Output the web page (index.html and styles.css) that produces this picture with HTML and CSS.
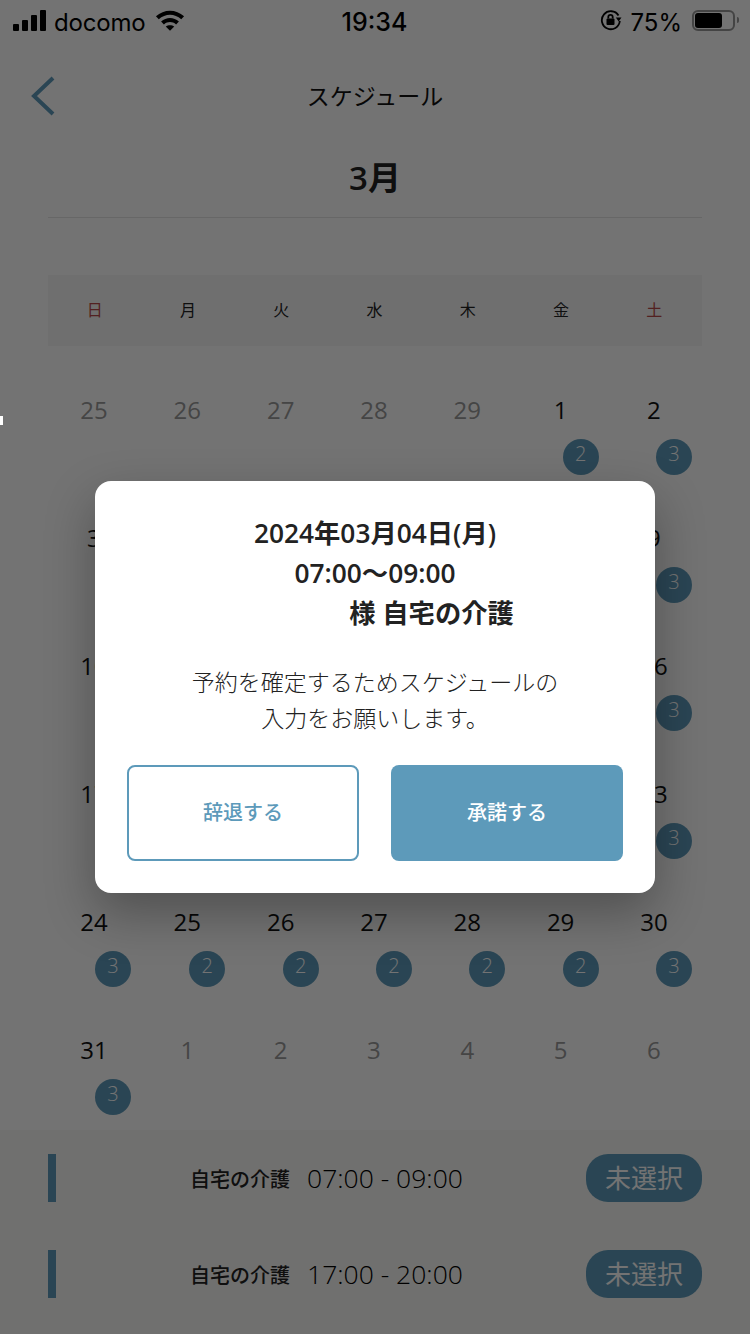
FILE: index.html
```html
<!DOCTYPE html>
<html lang="ja">
<head>
	<meta charset="UTF-8">
	<title>スケジュール</title>
	<link rel="stylesheet" href="styles.css">
</head>
<body>
	<div class="page">
		<div class="status">
			<div class="status-left">
				<span class="signal"><i></i><i></i><i></i><i></i></span>
				<span class="carrier">docomo</span>
				<svg class="wifi" width="30" height="23" viewBox="0 0 32 24"><path d="M1 7.500C9.500 -.5 22.500 -.5 31 7.500L28 10.700C21 4.300 11 4.300 4 10.700Z"/><path d="M6.500 13C12 8 20 8 25.500 13L22.500 16.200C18.500 12.800 13.500 12.800 9.500 16.200Z"/><path d="M11.500 18.500C14 16.500 18 16.500 20.500 18.500L16 23Z"/></svg>
			</div>
			<div class="status-time">19:34</div>
			<div class="status-right">
				<svg class="lock" width="22" height="22" viewBox="0 0 22 22"><path class="lock-ring" d="M18.500 6.500A9 9 0 1 0 19.800 12"/><path d="M15.800 8.500H21.500L18.700 12.500Z"/><rect x="6.500" y="9.500" width="8" height="6.500" rx="1"/><path class="lock-ring" d="M8.300 9.500V8A2.200 2.200 0 0 1 12.700 8V9.500"/></svg>
				<span class="battery-text">75%</span>
				<span class="battery"><b></b></span>
				<span class="battery-tip"></span>
			</div>
		</div>

		<div class="nav">
			<svg class="back" width="26" height="40" viewBox="0 0 26 40"><path d="M23 2L4 20L23 38"/></svg>
			<div class="nav-title">スケジュール</div>
		</div>

		<div class="calendar">
			<div class="month">3月</div>
			<div class="week">
				<span class="sun">日</span><span>月</span><span>火</span><span>水</span><span>木</span><span>金</span><span class="sat">土</span>
			</div>
			<div class="days">
				<div class="day off"><p>25</p></div>
				<div class="day off"><p>26</p></div>
				<div class="day off"><p>27</p></div>
				<div class="day off"><p>28</p></div>
				<div class="day off"><p>29</p></div>
				<div class="day"><p>1</p><em>2</em></div>
				<div class="day"><p>2</p><em>3</em></div>

				<div class="day"><p>3</p></div>
				<div class="day"></div>
				<div class="day"></div>
				<div class="day"></div>
				<div class="day"></div>
				<div class="day"></div>
				<div class="day"><p>9</p><em>3</em></div>

				<div class="day"><p>10</p></div>
				<div class="day"></div>
				<div class="day"></div>
				<div class="day"></div>
				<div class="day"></div>
				<div class="day"></div>
				<div class="day"><p>16</p><em>3</em></div>

				<div class="day"><p>17</p></div>
				<div class="day"></div>
				<div class="day"></div>
				<div class="day"></div>
				<div class="day"></div>
				<div class="day"></div>
				<div class="day"><p>23</p><em>3</em></div>

				<div class="day"><p>24</p><em>3</em></div>
				<div class="day"><p>25</p><em>2</em></div>
				<div class="day"><p>26</p><em>2</em></div>
				<div class="day"><p>27</p><em>2</em></div>
				<div class="day"><p>28</p><em>2</em></div>
				<div class="day"><p>29</p><em>2</em></div>
				<div class="day"><p>30</p><em>3</em></div>

				<div class="day"><p>31</p><em>3</em></div>
				<div class="day off"><p>1</p></div>
				<div class="day off"><p>2</p></div>
				<div class="day off"><p>3</p></div>
				<div class="day off"><p>4</p></div>
				<div class="day off"><p>5</p></div>
				<div class="day off"><p>6</p></div>
			</div>
		</div>

		<div class="slots">
			<div class="slot">
				<span class="slot-bar"></span>
				<span class="slot-name">自宅の介護</span>
				<span class="slot-time">07:00 - 09:00</span>
				<span class="slot-tag">未選択</span>
			</div>
			<div class="slot">
				<span class="slot-bar"></span>
				<span class="slot-name">自宅の介護</span>
				<span class="slot-time">17:00 - 20:00</span>
				<span class="slot-tag">未選択</span>
			</div>
		</div>
	</div>

	<div class="mask">
		<div class="dialog">
			<div class="dialog-head">
				<p>2024年03月04日(月)</p>
				<p>07:00〜09:00</p>
				<p class="dialog-who">様 自宅の介護</p>
			</div>
			<div class="dialog-text">予約を確定するためスケジュールの<br>入力をお願いします。</div>
			<div class="dialog-btns">
				<a class="btn btn-line">辞退する</a>
				<a class="btn btn-fill">承諾する</a>
			</div>
		</div>
	</div>
	<span class="speck"></span>
</body>
</html>
```

FILE: styles.css
```css
*{
	padding: 0;
	margin: 0;
	box-sizing: border-box;
}

body{
	width: 750px;
	height: 1334px;
	overflow: hidden;
	position: relative;
	background: #fff;
	color: #222;
	font-family: "Open Sans", "Noto Sans CJK JP", sans-serif;
}

.page{
	height: 1334px;
	display: flex;
	flex-direction: column;
}

/* status bar */
.status{
	height: 40px;
	padding: 0 11px 0 13px;
	display: grid;
	grid-template-columns: 1fr auto 1fr;
	align-items: center;
	color: #000;
	font-family: Inter, "Liberation Sans", sans-serif;
	font-size: 24px;
	position: relative;
	z-index: 3;
}
.status-left,
.status-right{
	display: flex;
	align-items: center;
}
.status-right{
	justify-content: flex-end;
}
.signal{
	display: flex;
	align-items: flex-end;
	gap: 3px;
	height: 21px;
	margin-right: 9px;
}
.signal i{
	width: 6px;
	background: #000;
	border-radius: 1px;
}
.signal i:nth-child(1){ height: 7px; }
.signal i:nth-child(2){ height: 11px; }
.signal i:nth-child(3){ height: 16px; }
.signal i:nth-child(4){ height: 21px; }
.carrier,
.status-time,
.battery-text{
	padding-top: 4px;
}
.carrier{
	letter-spacing: -.2px;
	margin-left: -1px;
}
.wifi{
	margin-left: 10px;
}
.status-time{
	font-weight: 500;
	font-size: 25px;
	padding-right: 3px;
}
.lock{
	margin-right: 8px;
}
.lock-ring{
	fill: none;
	stroke: #000;
	stroke-width: 1.800;
}
.battery-text{
	margin-right: 10px;
}
.battery{
	width: 43px;
	height: 21px;
	border: 2px solid #444;
	border-radius: 6px;
	padding: 1px;
	display: block;
}
.battery b{
	display: block;
	width: 27px;
	height: 15px;
	background: #000;
	border-radius: 3px;
}
.battery-tip{
	width: 2px;
	height: 6px;
	background: #444;
	margin-left: 2px;
	border-radius: 0 2px 2px 0;
}

/* nav */
.nav{
	height: 112px;
	flex: none;
	position: relative;
	display: flex;
	justify-content: center;
	padding-top: 38px;
}
.nav-title{
	font-size: 23px;
	line-height: 36px;
	font-weight: 400;
	color: #111;
}
.back{
	position: absolute;
	left: 30px;
	top: 36px;
}
.back path{
	fill: none;
	stroke: #5d9aba;
	stroke-width: 4px;
}

/* calendar */
.calendar{
	padding: 0 48px;
	flex: 1;
	min-height: 0;
}
.month{
	height: 66px;
	border-bottom: 1px solid #e4e4e4;
	text-align: center;
	font-size: 33px;
	font-weight: 600;
	line-height: 52px;
}
.week{
	margin-top: 57px;
	height: 71px;
	background: #f6f6f6;
	padding: 0 1px 4px 0;
	display: grid;
	grid-template-columns: repeat(7, 1fr);
	align-items: center;
	text-align: center;
	font-size: 16px;
}
.sun,
.sat{
	color: #b94a4a;
}
.days{
	margin: 36px 0 0 -.7px;
	padding-right: 1.400px;
	display: grid;
	grid-template-columns: repeat(7, 1fr);
	grid-auto-rows: 128px;
}
.day{
	display: flex;
	flex-direction: column;
	align-items: center;
}
.day p{
	font-size: 24px;
	line-height: 56px;
	height: 56px;
	color: #111;
}
.day.off p{
	color: #999;
}
.day em{
	width: 36px;
	height: 36px;
	border-radius: 50%;
	background: #5d9aba;
	color: #fff;
	font-style: normal;
	font-size: 20px;
	font-weight: 300;
	line-height: 30px;
	text-align: center;
	margin-left: 40px;
	margin-top: 1px;
}
.day:nth-child(7n+1) em{
	margin-left: 38px;
}

/* slots */
.slots{
	height: 204px;
	flex: none;
	background: #f8f8f6;
	padding: 24px 48px 0;
	display: flex;
	flex-direction: column;
	gap: 48px;
}
.slot{
	height: 48px;
	display: flex;
	align-items: center;
}
.slot-bar{
	width: 8px;
	height: 48px;
	background: #5d9aba;
	margin-right: 134px;
}
.slot-name{
	font-size: 20px;
	font-weight: 500;
	width: 117px;
	color: #222;
}
.slot-time{
	font-size: 26.500px;
	font-weight: 300;
	flex: 1;
	color: #000;
}
.slot-tag{
	width: 116px;
	height: 48px;
	border-radius: 22px;
	background: #5d9aba;
	color: #fff;
	font-size: 26px;
	line-height: 48px;
	text-align: center;
}

/* dialog */
.mask{
	position: absolute;
	left: 0;
	top: 0;
	width: 750px;
	height: 1334px;
	background: rgba(0,0,0,.55);
	display: flex;
	justify-content: center;
	padding-top: 481px;
	z-index: 2;
}
.dialog{
	width: 560px;
	height: 412px;
	background: #fff;
	border-radius: 16px;
	padding: 32px 32px 0;
	box-shadow: 0 20px 50px rgba(0,0,0,.3);
}
.dialog-head{
	text-align: center;
	font-size: 26.300px;
	font-weight: 600;
	line-height: 40px;
	color: #222;
}
.dialog-who{
	padding-left: 113px;
}
.dialog-text{
	margin-top: 31px;
	text-align: center;
	font-size: 23px;
	line-height: 36px;
	font-weight: 300;
	color: #222;
}
.dialog-btns{
	margin-top: 29px;
	display: flex;
	justify-content: space-between;
}
.btn{
	width: 232px;
	height: 96px;
	border-radius: 8px;
	font-size: 20px;
	font-weight: 500;
	line-height: 96px;
	text-align: center;
}
.btn-line{
	border: 2px solid #5d9aba;
	color: #5d9aba;
	line-height: 92px;
}
.btn-fill{
	background: #5d9aba;
	color: #fff;
}

.speck{
	position: absolute;
	left: 0;
	top: 416px;
	width: 3px;
	height: 9px;
	background: #fff;
	z-index: 4;
}
```
